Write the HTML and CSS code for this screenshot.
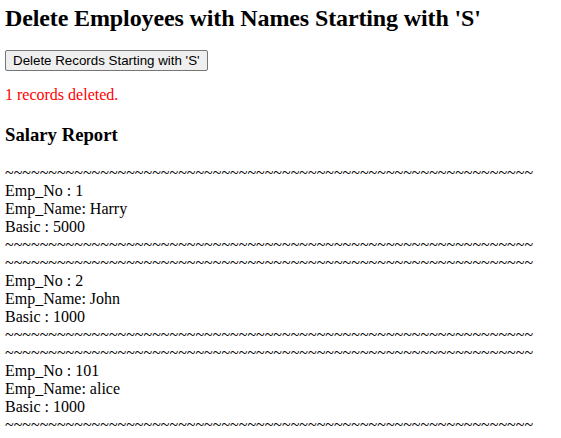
FILE: index.html
```html
<!DOCTYPE html>
<html>
<head>
<meta charset="utf-8">
<title>Delete Employees</title>
<link rel="stylesheet" href="styles.css">
</head>
<body>
<h2 class="title">Delete Employees with Names Starting with 'S'</h2>
<form class="form">
<button type="button" class="btn">Delete Records Starting with 'S'</button>
</form>
<p class="msg">1 records deleted.</p>
<h3 class="report-title">Salary Report</h3>
<div class="report">
<div class="sep">~~~~~~~~~~~~~~~~~~~~~~~~~~~~~~~~~~~~~~~~~~~~~~~~~~~~~~~~~~~~~</div>
<div>Emp_No : 1</div>
<div>Emp_Name: Harry</div>
<div>Basic : 5000</div>
<div class="sep">~~~~~~~~~~~~~~~~~~~~~~~~~~~~~~~~~~~~~~~~~~~~~~~~~~~~~~~~~~~~~</div>
<div class="sep">~~~~~~~~~~~~~~~~~~~~~~~~~~~~~~~~~~~~~~~~~~~~~~~~~~~~~~~~~~~~~</div>
<div>Emp_No : 2</div>
<div>Emp_Name: John</div>
<div>Basic : 1000</div>
<div class="sep">~~~~~~~~~~~~~~~~~~~~~~~~~~~~~~~~~~~~~~~~~~~~~~~~~~~~~~~~~~~~~</div>
<div class="sep">~~~~~~~~~~~~~~~~~~~~~~~~~~~~~~~~~~~~~~~~~~~~~~~~~~~~~~~~~~~~~</div>
<div>Emp_No : 101</div>
<div>Emp_Name: alice</div>
<div>Basic : 1000</div>
<div class="sep">~~~~~~~~~~~~~~~~~~~~~~~~~~~~~~~~~~~~~~~~~~~~~~~~~~~~~~~~~~~~~</div>
</div>
</body>
</html>
```
FILE: styles.css
```css
html, body {
  background: #fff;
}
body {
  margin: 0;
  padding: 0 5px;
  font-family: "Liberation Serif", "Times New Roman", serif;
  font-size: 16px;
  color: #000;
}
.title {
  font-size: 24px;
  font-weight: bold;
  line-height: 28px;
  letter-spacing: -0.12px;
  margin: 4px 0 0;
}
.form {
  margin: 18px 0 0;
}
.btn {
  font-family: "Liberation Sans", Arial, sans-serif;
  font-size: 13.333px;
  color: #000;
  background: #efefef;
  border: 1px solid #767676;
  border-radius: 2px;
  padding: 1px 7px;
  height: 21px;
  display: block;
}
.msg {
  color: #ff0000;
  margin: 15px 0 0;
  line-height: 18px;
}
.report-title {
  font-size: 18.72px;
  font-weight: bold;
  line-height: 22px;
  margin: 20px 0 0;
}
.report {
  margin-top: 18px;
  line-height: 18px;
  white-space: nowrap;
}
```
